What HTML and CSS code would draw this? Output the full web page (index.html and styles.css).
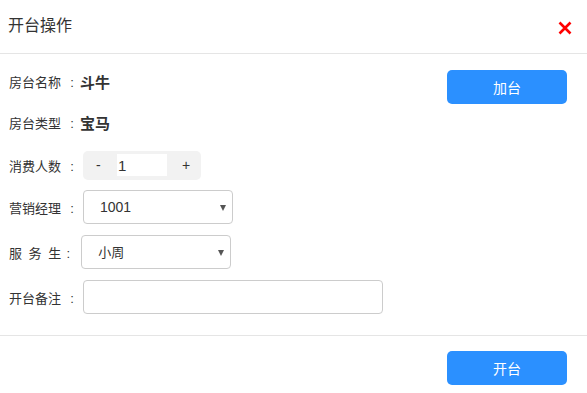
FILE: index.html
```html
<!DOCTYPE html>
<html lang="zh-CN">
<head>
    <meta charset="UTF-8">
    <meta name="viewport" content="width=device-width, initial-scale=1.0">
    <title>开台操作</title>
    <link rel="stylesheet" href="styles.css">
</head>
<body>
    <div class="dialog">
        <div class="dialog-header">
            <h2 class="dialog-title">开台操作</h2>
            <button class="close-btn" type="button" aria-label="关闭">
                <svg width="14" height="14" viewBox="0 0 14 14">
                    <path d="M1.5 1.5 L12.5 12.5 M12.5 1.5 L1.5 12.5" stroke="#f00" stroke-width="2.6" fill="none"/>
                </svg>
            </button>
        </div>

        <div class="dialog-body">
            <form class="open-form">
                <div class="form-row form-row--text">
                    <span class="label">房台名称<span class="colon">:</span></span>
                    <strong class="value">斗牛</strong>
                </div>
                <div class="form-row form-row--text">
                    <span class="label">房台类型<span class="colon">:</span></span>
                    <strong class="value">宝马</strong>
                </div>
                <div class="form-row">
                    <span class="label">消费人数<span class="colon">:</span></span>
                    <div class="stepper">
                        <span class="step-btn">-</span>
                        <input class="step-input" type="text" value="1">
                        <span class="step-btn step-plus">+</span>
                    </div>
                </div>
                <div class="form-row">
                    <span class="label">营销经理<span class="colon">:</span></span>
                    <div class="select-box">
                        <select class="select select-num">
                            <option>1001</option>
                        </select>
                        <span class="arrow"></span>
                    </div>
                </div>
                <div class="form-row form-row--wide">
                    <span class="label label-spaced">服 务 生<span class="colon">:</span></span>
                    <div class="select-box">
                        <select class="select">
                            <option>小周</option>
                        </select>
                        <span class="arrow"></span>
                    </div>
                </div>
                <div class="form-row form-row--wide">
                    <span class="label">开台备注<span class="colon">:</span></span>
                    <input class="remark" type="text">
                </div>
            </form>

            <div class="side">
                <button class="btn" type="button">加台</button>
            </div>
        </div>

        <div class="dialog-footer">
            <button class="btn" type="button">开台</button>
        </div>
    </div>
</body>
</html>
```

FILE: styles.css
```css
body {
    margin: 0;
    background-color: #fff;
    color: #333;
    font-family: "Liberation Sans", "Noto Sans CJK SC", sans-serif;
}

.dialog {
    width: 587px;
}

.dialog-header {
    height: 53px;
    border-bottom: 1px solid #e5e5e5;
    display: flex;
    align-items: center;
    justify-content: space-between;
    padding: 0 15px 0 8px;
}

.dialog-title {
    margin: 0 0 5px;
    font-size: 16px;
    font-weight: normal;
    color: #333;
}

.close-btn {
    border: none;
    background: none;
    padding: 0;
    margin-top: 3px;
    width: 14px;
    height: 14px;
    cursor: pointer;
}

.close-btn svg {
    display: block;
}

.dialog-body {
    display: flex;
    justify-content: space-between;
    padding: 12px 20px 21px 9px;
}

.open-form {
    display: flex;
    flex-direction: column;
    gap: 8px;
}

.form-row {
    height: 34px;
    display: flex;
    align-items: center;
}

.form-row--text {
    height: 30px;
}

.form-row--text + .form-row,
.form-row--wide {
    margin-top: 3px;
}

.label {
    font-size: 13px;
    white-space: pre;
}

.colon {
    display: inline-block;
    width: 22px;
    text-align: center;
}

.label-spaced {
    word-spacing: 3px;
}

.label-spaced .colon {
    width: 14px;
    margin-right: 6px;
}

.value {
    font-size: 15px;
    margin-left: -3px;
}

.stepper {
    width: 118px;
    height: 29px;
    background-color: #f2f2f2;
    border-radius: 5px;
    display: flex;
    align-items: center;
    box-sizing: border-box;
    padding: 0 0 0 13px;
}

.step-btn {
    flex-shrink: 0;
    font-size: 14px;
    width: 21px;
}

.step-plus {
    width: auto;
    margin-left: 15px;
}

.step-input {
    flex-shrink: 0;
    width: 50px;
    height: 22px;
    box-sizing: border-box;
    border: none;
    padding: 0 0 0 1px;
    margin: 0;
    font-family: inherit;
    font-size: 15px;
    color: #333;
    background: #fff;
    outline: none;
}

.select-box {
    position: relative;
}

.select {
    appearance: none;
    -webkit-appearance: none;
    width: 150px;
    height: 34px;
    border: 1px solid #ccc;
    border-radius: 4px;
    background: #fff;
    padding: 0 0 0 16px;
    font-family: inherit;
    font-size: 13px;
    color: #333;
}

.select-num {
    font-size: 14px;
}

.arrow {
    position: absolute;
    right: 7px;
    top: 15px;
    border-left: 3.5px solid transparent;
    border-right: 3.5px solid transparent;
    border-top: 6px solid #555;
}

.remark {
    width: 300px;
    height: 34px;
    box-sizing: border-box;
    border: 1px solid #ccc;
    border-radius: 4px;
    padding: 0 8px;
    outline: none;
}

.side {
    padding-top: 4px;
}

.btn {
    width: 120px;
    height: 34px;
    border: none;
    border-radius: 5px;
    background-color: #2b90ff;
    color: #fff;
    font-family: inherit;
    font-size: 14px;
    cursor: pointer;
}

.btn:hover {
    background-color: #1f84f2;
}

.dialog-footer {
    border-top: 1px solid #e5e5e5;
    display: flex;
    justify-content: flex-end;
    padding: 15px 20px 0 0;
}
```
